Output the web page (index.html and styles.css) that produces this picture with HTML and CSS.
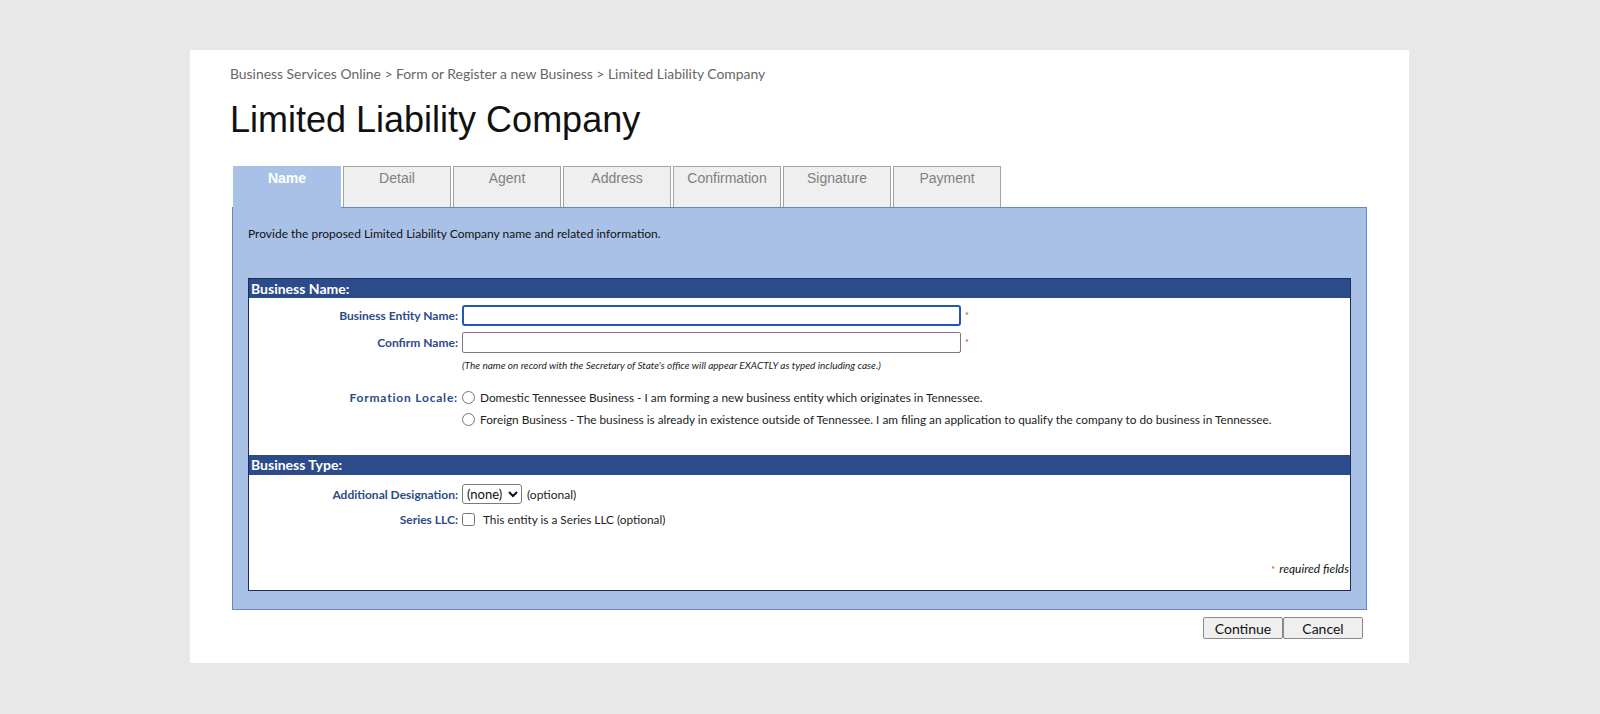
FILE: index.html
```html
<!DOCTYPE html>
<html lang="en">
<head>
    <meta charset="UTF-8">
    <meta name="viewport" content="width=device-width, initial-scale=1.0">
    <title>Limited Liability Company</title>
    <link rel="stylesheet" href="styles.css">
</head>
<body>

    <div class="page">
        <p class="crumbs">Business Services Online &gt; Form or Register a new Business &gt; Limited Liability Company</p>
        <h1>Limited Liability Company</h1>

        <!-- Step tabs -->
        <div class="tabs">
            <div class="tab active">Name</div>
            <div class="tab">Detail</div>
            <div class="tab">Agent</div>
            <div class="tab">Address</div>
            <div class="tab">Confirmation</div>
            <div class="tab">Signature</div>
            <div class="tab">Payment</div>
        </div>

        <div class="panel">
            <p class="intro">Provide the proposed Limited Liability Company name and related information.</p>

            <div class="form-box">
                <!-- Business name section -->
                <div class="section-head">Business Name:</div>

                <div class="row first">
                    <label class="label" for="entity-name">Business Entity Name:</label>
                    <input type="text" id="entity-name" class="text-input focused">
                    <span class="req">*</span>
                </div>
                <div class="row second">
                    <label class="label" for="confirm-name">Confirm Name:</label>
                    <input type="text" id="confirm-name" class="text-input">
                    <span class="req">*</span>
                </div>
                <p class="note">(The name on record with the Secretary of State's office will appear EXACTLY as typed including case.)</p>

                <div class="row locale">
                    <span class="label wide">Formation Locale:</span>
                    <label class="option"><input type="radio" name="locale"> Domestic Tennessee Business - I am forming a new business entity which originates in Tennessee.</label>
                </div>
                <div class="row locale-2">
                    <span class="label"></span>
                    <label class="option"><input type="radio" name="locale"> Foreign Business - The business is already in existence outside of Tennessee. I am filing an application to qualify the company to do business in Tennessee.</label>
                </div>

                <!-- Business type section -->
                <div class="section-head second-head">Business Type:</div>

                <div class="row designation">
                    <label class="label" for="designation">Additional Designation:</label>
                    <select id="designation" class="select">
                        <option>(none)</option>
                        <option>LLC</option>
                        <option>L.L.C.</option>
                    </select>
                    <span class="hint">(optional)</span>
                </div>
                <div class="row series">
                    <label class="label" for="series">Series LLC:</label>
                    <label class="option check"><input type="checkbox" id="series"> This entity is a Series LLC (optional)</label>
                </div>

                <p class="required"><span class="req">*</span> required fields</p>
            </div>
        </div>

        <div class="buttons">
            <button class="btn">Continue</button>
            <button class="btn">Cancel</button>
        </div>
    </div>

</body>
</html>
```

FILE: styles.css
```css
/* General styles */
body {
    margin: 0;
    padding: 50px 0 0 190px;
    background: #e8e8e8;
    font-family: 'Lato', 'Liberation Sans', Arial, sans-serif;
    color: #222;
}

.page {
    box-sizing: border-box;
    width: 1219px;
    height: 613px;
    background: #fff;
    padding: 16px 42px 0 42px;
}

.crumbs {
    margin: 0 0 0 -2px;
    font-size: 13.9px;
    line-height: 16px;
    color: #666;
}

h1 {
    margin: 18px 0 0 -2px;
    font-family: 'Liberation Sans', Arial, sans-serif;
    font-weight: normal;
    font-size: 36px;
    line-height: 40px;
    color: #111;
}

/* Tabs */
.tabs {
    display: flex;
    gap: 2px;
    margin-top: 26px;
    padding-left: 1px;
}

.tab {
    box-sizing: border-box;
    width: 108px;
    height: 41px;
    padding-top: 3px;
    border: 1px solid #a3a3a3;
    border-bottom: none;
    background: #efefef;
    font-family: 'Liberation Sans', Arial, sans-serif;
    font-size: 14px;
    line-height: 16px;
    color: #808080;
    text-align: center;
}

.tab.active {
    position: relative;
    height: 42px;
    margin-bottom: -1px;
    border-color: #aac1e7;
    background: #aac1e7;
    color: #fff;
    font-weight: bold;
}

/* Blue panel round the form */
.panel {
    border: 1px solid #6d87bd;
    background: #aac1e7;
    padding: 19px 15px 18px 15px;
}

.intro {
    margin: 0 0 37px 0;
    font-size: 12px;
    line-height: 14px;
    color: #111;
}

.form-box {
    border: 1px solid #1c2c58;
    background: #fff;
    padding-bottom: 12px;
}

.section-head {
    height: 19px;
    padding-left: 2px;
    background: #2b4b8a;
    color: #fff;
    font-size: 14px;
    font-weight: bold;
    line-height: 19px;
}

.section-head.second-head {
    height: 20px;
    margin-top: 25px;
    line-height: 20px;
}

/* Form rows */
.row {
    display: flex;
    align-items: center;
    font-size: 12px;
}

.label {
    width: 209px;
    margin-right: 4px;
    flex-shrink: 0;
    text-align: right;
    font-weight: bold;
    color: #2b4b8a;
}

.label.wide {
    letter-spacing: 0.8px;
}

.row.first { margin-top: 7px; height: 21px; }
.row.second { margin-top: 6px; height: 21px; }
.row.locale { margin-top: 14px; height: 22px; }
.row.locale-2 { height: 22px; }
.row.designation { margin-top: 9px; height: 20px; }
.row.series { margin-top: 5px; height: 20px; }

.text-input {
    box-sizing: border-box;
    width: 499px;
    height: 21px;
    margin: 0;
    border: 1px solid #7a7a7a;
    border-radius: 2px;
    font-family: inherit;
}

.text-input.focused {
    border: 2px solid #1f5ab0;
    border-radius: 3px;
    outline: none;
}

.req {
    margin-left: 4px;
    font-size: 9px;
    color: #d03030;
}

.note {
    margin: 5px 0 0 213px;
    font-size: 10px;
    font-style: italic;
    line-height: 14px;
    color: #222;
}

.option {
    display: flex;
    align-items: center;
    gap: 5px;
    font-size: 11.8px;
    color: #222;
}

.option input {
    margin: 0;
    width: 13px;
    height: 13px;
}

.option.check {
    gap: 8px;
}

.select {
    width: 60px;
    height: 20px;
    margin: 0;
    font-family: inherit;
    font-size: 13px;
    color: #111;
    border: 1px solid #7a7a7a;
    border-radius: 3px;
    background: #fff;
}

.hint {
    margin-left: 5px;
    color: #222;
}

.required {
    margin: 32px 1px 0 0;
    text-align: right;
    font-size: 12px;
    font-style: italic;
    line-height: 16px;
    color: #111;
}

.required .req {
    margin: 0 2px 0 0;
}

/* Continue / Cancel */
.buttons {
    display: flex;
    justify-content: flex-end;
    margin: 7px 4px 0 0;
}

.btn {
    box-sizing: border-box;
    width: 80px;
    height: 22px;
    margin: 0;
    padding: 0;
    border: 1px solid #8a8a8a;
    border-radius: 2px;
    background: #efefef;
    font-family: inherit;
    font-size: 14px;
    color: #111;
}
```
